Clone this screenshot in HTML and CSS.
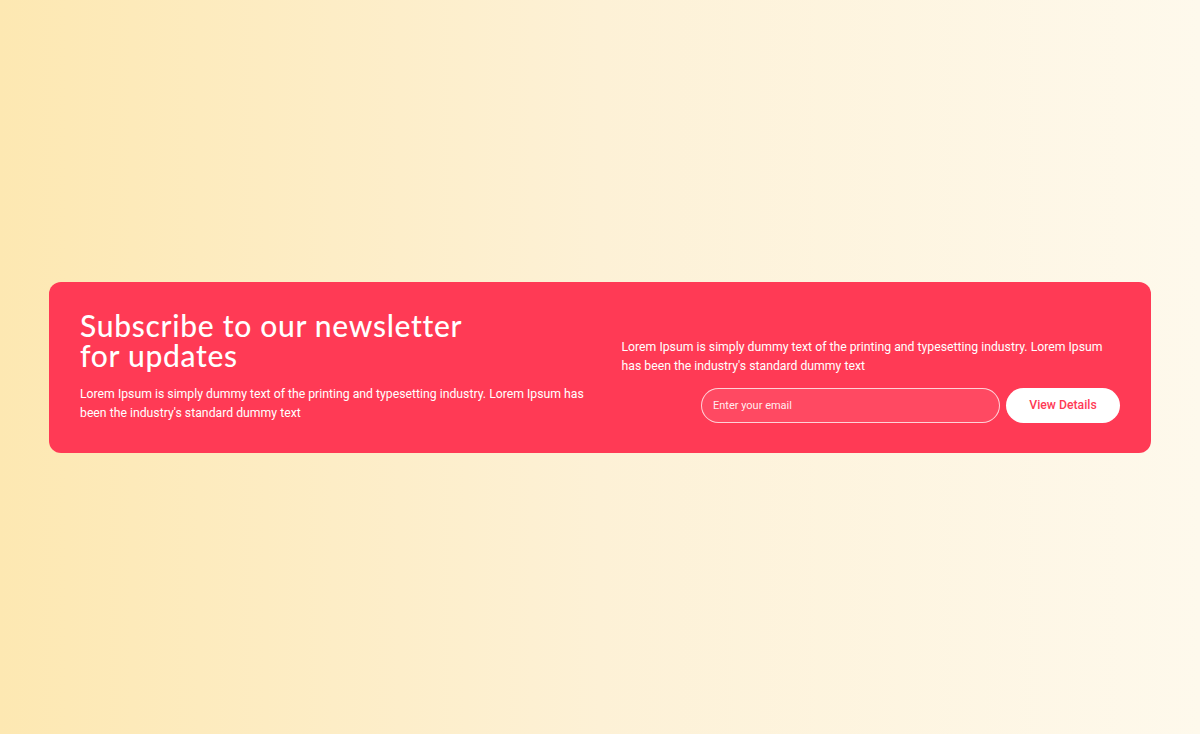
FILE: index.html
```html
<!DOCTYPE html>
<html lang="en">
<head>
<meta charset="utf-8">
<title>Newsletter</title>
<link rel="stylesheet" href="styles.css">
</head>
<body>
<main class="page">
  <section class="card">
    <div class="col col-left">
      <h2 class="title">Subscribe to our newsletter<br>for updates</h2>
      <p class="text">Lorem Ipsum is simply dummy text of the printing and typesetting industry. Lorem Ipsum has been the industry's standard dummy text</p>
    </div>
    <div class="col col-right">
      <p class="text">Lorem Ipsum is simply dummy text of the printing and typesetting industry. Lorem Ipsum has been the industry's standard dummy text</p>
      <form class="form">
        <input class="email" type="email" placeholder="Enter your email">
        <button class="btn" type="button">View Details</button>
      </form>
    </div>
  </section>
</main>
</body>
</html>
```
FILE: styles.css
```css
* { box-sizing: border-box; }
html, body { margin: 0; height: 100%; }
body {
  font-family: Roboto, "Liberation Sans", sans-serif;
  background: linear-gradient(90deg, #fde8b2 0%, #fdf1d6 50%, #fef9ec 100%);
}
.page {
  height: 734px;
  display: flex;
  align-items: center;
  padding: 0 49px;
}
.card {
  width: 100%;
  background: #ff3a55;
  border-radius: 12px;
  padding: 28px 31px 30px;
  display: grid;
  grid-template-columns: 1fr 1fr;
  column-gap: 21px;
  color: #fff;
}
.col-right {
  display: flex;
  flex-direction: column;
  justify-content: flex-end;
  padding-left: 11px;
}
.title {
  margin: 0 0 15px;
  font-family: Lato, "Open Sans", sans-serif;
  font-weight: 500;
  font-size: 30px;
  line-height: 30px;
  letter-spacing: 0.7px;
}
.text {
  margin: 0;
  font-size: 12.25px;
  line-height: 19px;
}
.form {
  margin-top: 12px;
  display: flex;
  justify-content: flex-end;
  gap: 6px;
}
.email {
  width: 299px;
  height: 35px;
  border: 1px solid rgba(255,255,255,0.75);
  border-radius: 18px;
  background: rgba(255,255,255,0.08);
  padding: 0 11px;
  font-family: Roboto, sans-serif;
  font-size: 11px;
  color: #fff;
  outline: none;
}
.email::placeholder { color: rgba(255,255,255,0.92); }
.btn {
  width: 114px;
  height: 35px;
  border: 0;
  border-radius: 18px;
  background: #fff;
  color: #ff3a55;
  font-family: Roboto, sans-serif;
  font-weight: 500;
  font-size: 12.25px;
  cursor: pointer;
}
```
